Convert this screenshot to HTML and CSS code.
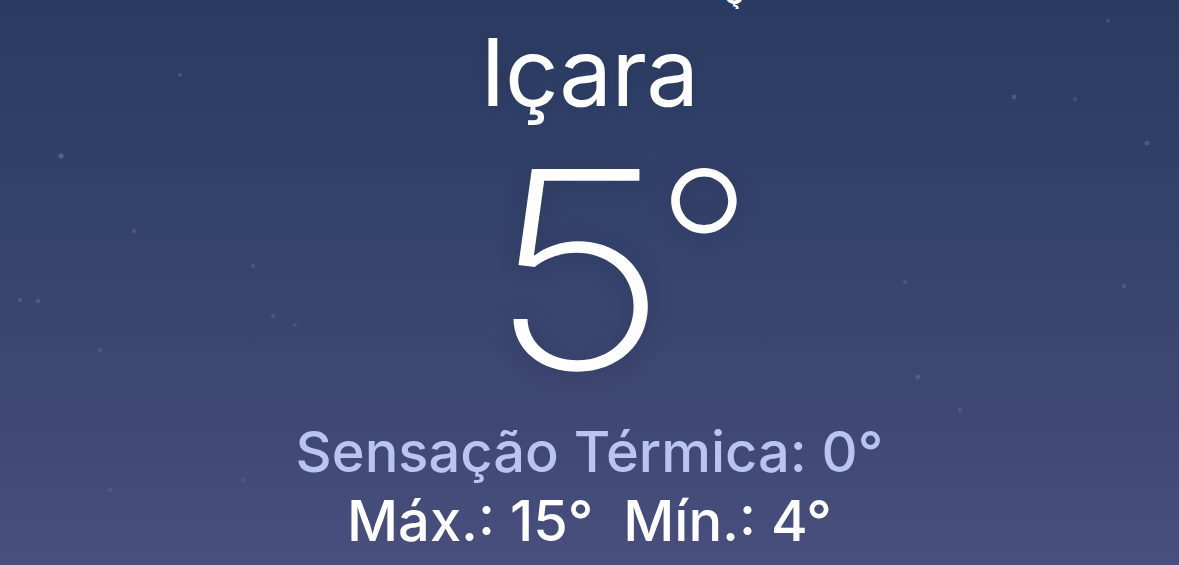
FILE: index.html
```html
<!DOCTYPE html>
<html lang="pt-BR">
<head>
<meta charset="utf-8">
<title>Içara</title>
<link rel="stylesheet" href="styles.css">
</head>
<body>
<main class="screen">
  <div class="stars"></div>
  <div class="clip-title"><span class="clip-text">ç</span></div>
  <h1 class="city">Içara</h1>
  <div class="temp"><span class="digit">5</span><span class="deg">°</span></div>
  <p class="feels">Sensação Térmica: 0°</p>
  <p class="range">Máx.: 15°&nbsp; Mín.: 4°</p>
</main>
</body>
</html>
```

FILE: styles.css
```css
html, body {
  margin: 0;
  padding: 0;
  height: 100%;
}
body {
  font-family: "Inter", "Liberation Sans", sans-serif;
  color: #fff;
  overflow: hidden;
}
.screen {
  position: relative;
  height: 565px;
  display: flex;
  flex-direction: column;
  align-items: center;
  background: linear-gradient(180deg, #2b3a60 0%, #34436c 40%, #3f4874 75%, #484f7d 100%);
}
.stars {
  position: absolute;
  inset: 0;
  pointer-events: none;
  background-image:
    radial-gradient(circle at 61px 156px, rgba(255,255,255,0.18) 0 2px, transparent 3px),
    radial-gradient(circle at 180px 75px, rgba(255,255,255,0.12) 0 1.5px, transparent 2.5px),
    radial-gradient(circle at 134px 231px, rgba(255,255,255,0.12) 0 1.5px, transparent 2.5px),
    radial-gradient(circle at 20px 300px, rgba(255,255,255,0.12) 0 1.5px, transparent 2.5px),
    radial-gradient(circle at 38px 301px, rgba(255,255,255,0.12) 0 1.5px, transparent 2.5px),
    radial-gradient(circle at 100px 350px, rgba(255,255,255,0.1) 0 1.5px, transparent 2.5px),
    radial-gradient(circle at 253px 266px, rgba(255,255,255,0.1) 0 1.5px, transparent 2.5px),
    radial-gradient(circle at 273px 316px, rgba(255,255,255,0.1) 0 1.5px, transparent 2.5px),
    radial-gradient(circle at 1014px 97px, rgba(255,255,255,0.14) 0 2px, transparent 3px),
    radial-gradient(circle at 1147px 143px, rgba(255,255,255,0.14) 0 2px, transparent 3px),
    radial-gradient(circle at 1108px 21px, rgba(255,255,255,0.1) 0 1.5px, transparent 2.5px),
    radial-gradient(circle at 1075px 99px, rgba(255,255,255,0.1) 0 1.5px, transparent 2.5px),
    radial-gradient(circle at 918px 377px, rgba(255,255,255,0.12) 0 2px, transparent 3px),
    radial-gradient(circle at 960px 410px, rgba(255,255,255,0.1) 0 1.5px, transparent 2.5px),
    radial-gradient(circle at 1124px 286px, rgba(255,255,255,0.1) 0 1.5px, transparent 2.5px),
    radial-gradient(circle at 905px 282px, rgba(255,255,255,0.1) 0 1.5px, transparent 2.5px),
    radial-gradient(circle at 295px 325px, rgba(255,255,255,0.08) 0 1.5px, transparent 2.5px),
    radial-gradient(circle at 110px 490px, rgba(255,255,255,0.08) 0 1.5px, transparent 2.5px),
    radial-gradient(circle at 243px 480px, rgba(255,255,255,0.08) 0 1.5px, transparent 2.5px);
}
.clip-title {
  position: relative;
  height: 9px;
  width: 100%;
  overflow: hidden;
}
.clip-text {
  position: absolute;
  left: 724px;
  bottom: 0;
  font-size: 34px;
  font-weight: 600;
  line-height: 34px;
}
.city {
  position: relative;
  margin: 8px 0 0;
  font-size: 94px;
  font-weight: 400;
  line-height: 110px;
  letter-spacing: -0.5px;
  text-shadow: 0 0 14px rgba(0,0,0,0.08);
}
.temp {
  position: relative;
  display: flex;
  align-items: flex-start;
  margin: 17px 0 0 72px;
  height: 250px;
  text-shadow: 0 0 24px rgba(0,0,0,0.14);
}
.digit {
  display: inline-block;
  font-size: 275px;
  font-weight: 200;
  line-height: 250px;
  transform: scaleX(1.14);
  transform-origin: center;
}
.deg {
  display: inline-block;
  margin: 4px 0 0 -2px;
  font-size: 213px;
  font-weight: 200;
  line-height: 200px;
}
.feels {
  position: relative;
  margin: 26px 0 0;
  font-size: 56px;
  font-weight: 500;
  line-height: 64px;
  color: #b9c4f1;
}
.range {
  position: relative;
  margin: 5px 0 0;
  font-size: 56px;
  font-weight: 500;
  line-height: 64px;
}
```
